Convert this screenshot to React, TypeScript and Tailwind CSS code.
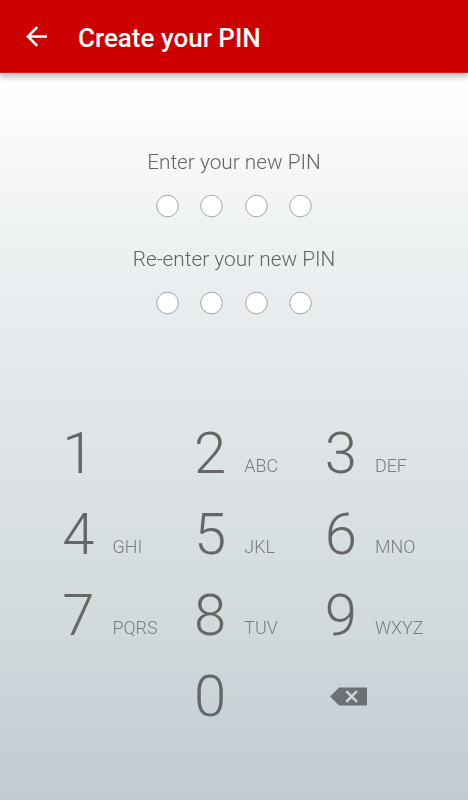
interface PinKey {
  digit: string;
  letters: string;
}

const keys: PinKey[] = [
  { digit: "1", letters: "" },
  { digit: "2", letters: "ABC" },
  { digit: "3", letters: "DEF" },
  { digit: "4", letters: "GHI" },
  { digit: "5", letters: "JKL" },
  { digit: "6", letters: "MNO" },
  { digit: "7", letters: "PQRS" },
  { digit: "8", letters: "TUV" },
  { digit: "9", letters: "WXYZ" },
];

function Header() {
  return (
    <header className="flex h-[73px] shrink-0 items-center border-b border-[#d21f1f] bg-[#cc0000] pl-6 shadow-[0_3px_6px_1px_rgba(0,0,0,0.26)]">
      <button type="button" aria-label="Back" className="flex size-6 text-white">
        <svg viewBox="0 0 24 24" className="size-6" fill="none" stroke="currentColor" strokeWidth="2.5">
          <path d="M23 12.5H4M13.2 3.2L3.9 12.5l9.3 9.3" />
        </svg>
      </button>
      <h1 className="ml-[30px] pt-[3px] text-[26px] font-medium leading-8 text-white">
        Create your PIN
      </h1>
    </header>
  );
}

function PinField({ label }: { label: string }) {
  return (
    <div className="flex h-[97px] flex-col items-center">
      <p className="text-[20.8px] font-light leading-7 text-[#646464]">{label}</p>
      <div className="mt-[18px] flex gap-[21.2px]">
        {[0, 1, 2, 3].map((i) => (
          <svg key={i} viewBox="0 0 23 23" className="size-[23px] overflow-visible">
            <circle cx="11.5" cy="12" r="10.8" fill="#fff" stroke="#999" strokeWidth="0.9" />
          </svg>
        ))}
      </div>
    </div>
  );
}

function Key({ digit, letters }: PinKey) {
  return (
    <button type="button" className="flex items-baseline text-left text-[#666]">
      <span className="w-[50.3px] text-[58px] font-light leading-[81px]">{digit}</span>
      <span className="-translate-y-px text-[17.9px] font-light text-[#7a7c7d]">{letters}</span>
    </button>
  );
}

export default function App() {
  return (
    <div className="flex h-[800px] w-[468px] flex-col overflow-hidden bg-[linear-gradient(to_bottom,#fff_80px,#eff2f3_225px,#dfe4e7_440px,#d2dadc_620px,#c9d2d8_710px,#c1cbd0_800px)] font-['Roboto',sans-serif]">
      <Header />
      <main className="flex flex-col pt-[75px] will-change-transform">
        <PinField label="Enter your new PIN" />
        <PinField label="Re-enter your new PIN" />
        <div className="mt-[70.5px] grid auto-rows-[81.3px] grid-cols-[131.8px_130.7px_140px] pl-[62.2px]">
          {keys.map((key) => (
            <Key key={key.digit} {...key} />
          ))}
          <div className="col-start-2 flex">
            <Key digit="0" letters="" />
          </div>
          <button type="button" aria-label="Delete" className="flex items-center pb-[2px] pl-[5px]">
            <svg viewBox="0 0 38 19" className="h-[19px] w-[38px]">
              <path d="M0 9.5L9 .5h28v18H9z" fill="#6d7173" />
              <path d="M16.3 4.2l10.6 10.6M26.9 4.2L16.3 14.8" stroke="#d0d6da" strokeWidth="2.4" />
            </svg>
          </button>
        </div>
      </main>
    </div>
  );
}
